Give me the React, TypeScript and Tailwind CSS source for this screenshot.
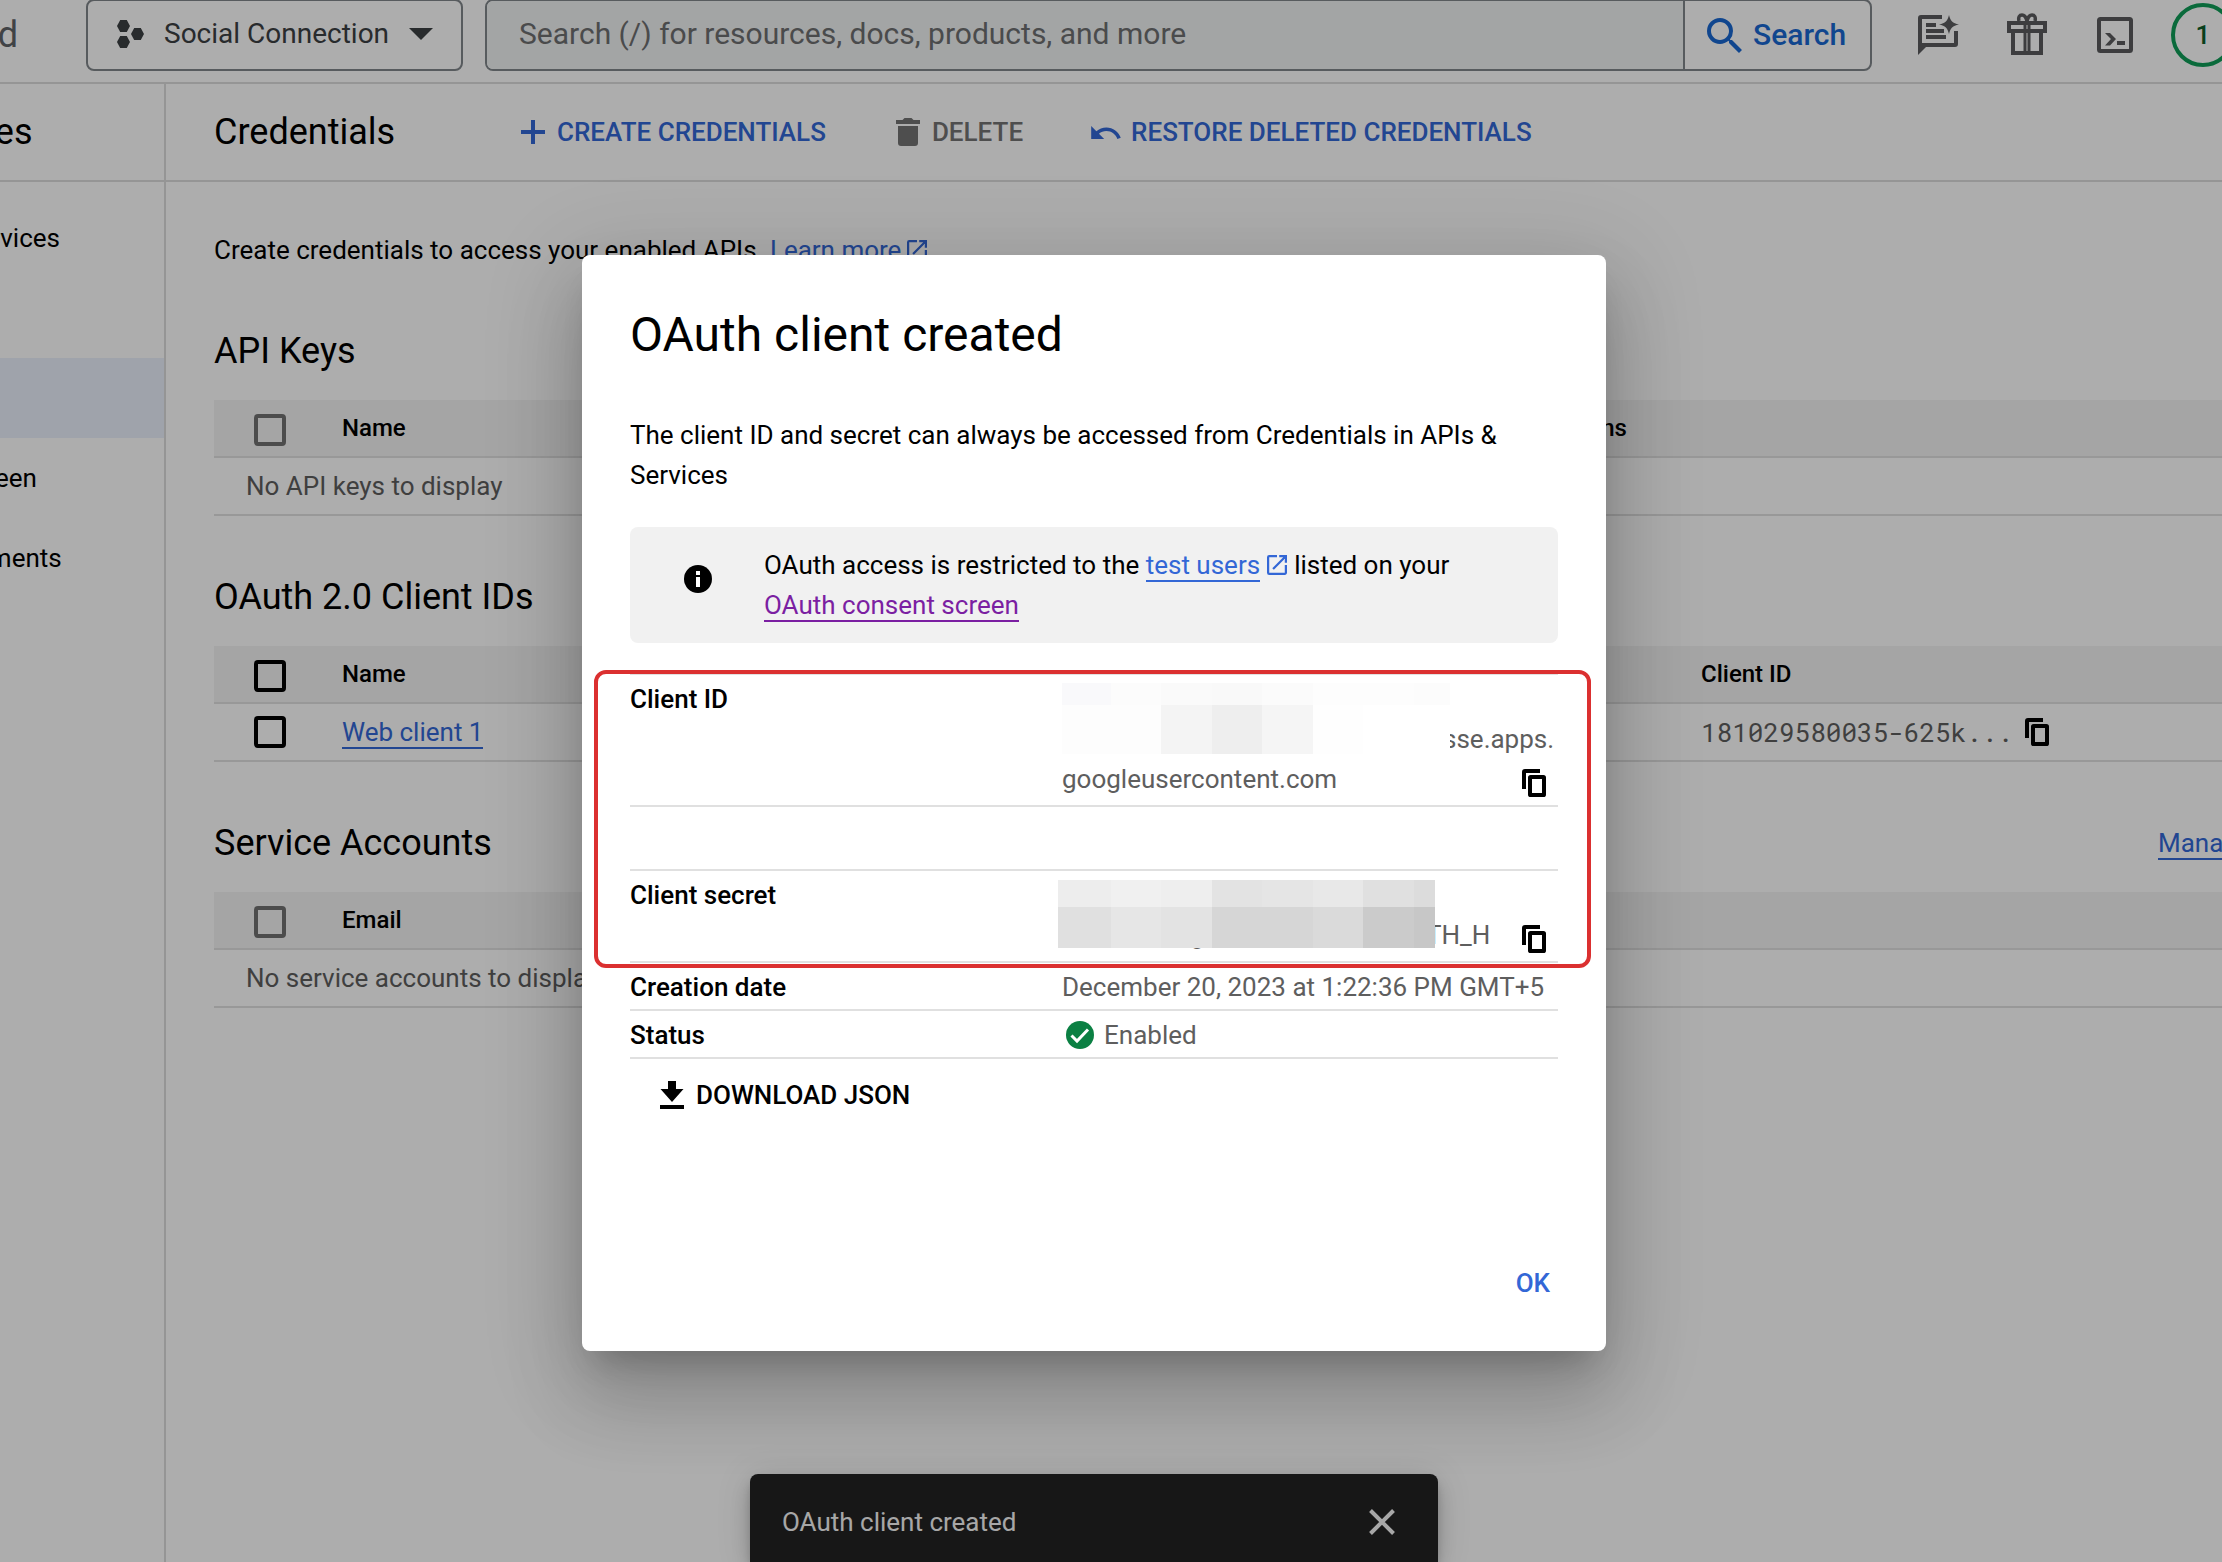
import { useState } from "react"
import type { ReactNode } from "react"

function CopyIcon() {
  return (
    <svg className="h-7 w-6" viewBox="0 0 24 28" fill="none" stroke="currentColor" strokeWidth="4" aria-hidden="true">
      <path d="M2 20V3a1 1 0 0 1 1-1h15" />
      <rect x="8" y="8" width="14" height="18" rx="0.6" />
    </svg>
  )
}

function ExternalIcon() {
  return (
    <svg className="inline-block size-5 align-[-1px]" viewBox="3 3 18 18" fill="currentColor" aria-hidden="true">
      <path d="M19 19H5V5h7V3H5a2 2 0 0 0-2 2v14a2 2 0 0 0 2 2h14c1.1 0 2-.9 2-2v-7h-2v7zM14 3v2h3.59l-9.83 9.83 1.41 1.41L19 6.41V10h2V3h-7z" />
    </svg>
  )
}

function Header() {
  return (
    <header className="flex h-[84px] shrink-0 items-start border-b-2 border-[#dcdcdc]">
      <div className="flex h-[70px] w-[86px] shrink-0 items-center">
        <div className="flex w-[18px] justify-end overflow-hidden text-4xl text-[#5f6368]">Cloud</div>
      </div>
      <button className="-mt-px flex h-[72px] w-[377px] shrink-0 items-center rounded-lg border-2 border-[#80868b] pb-[2px] pl-[29px] text-[28px] text-[#3c4043]">
        <svg className="mr-5 h-7 w-[27px]" viewBox="0 0 27 28" fill="currentColor" aria-hidden="true">
          <path d="M3.2 0h6.6L13 6l-3.2 6H3.2L0 6z" />
          <path d="M17.2 8h6.6L27 14l-3.2 6h-6.6L14 14z" />
          <path d="M3.2 16h6.6L13 22l-3.2 6H3.2L0 22z" />
        </svg>
        Social Connection
        <svg className="ml-auto mr-7 h-3 w-6" viewBox="0 0 24 12" fill="currentColor" aria-hidden="true">
          <path d="M0 0h24L12 12z" />
        </svg>
      </button>
      <form className="-mt-px ml-[22px] flex h-[72px] flex-1 overflow-hidden rounded-lg border-2 border-[#80868b] text-[30px]">
        <input
          type="text"
          aria-label="Search"
          placeholder="Search (/) for resources, docs, products, and more"
          className="min-w-0 flex-1 bg-[#f1f3f4] pb-[2px] pl-8 outline-none placeholder:text-[#6e6f70]"
        />
        <button type="button" className="flex w-[187px] items-center gap-[11px] border-l-2 border-[#80868b] pl-[22px] font-medium text-[#1967d2]">
          <svg className="size-[35px]" viewBox="3 3 17.5 17.5" fill="currentColor" aria-hidden="true">
            <path d="M15.5 14h-.79l-.28-.27A6.47 6.47 0 0 0 16 9.5 6.5 6.5 0 1 0 9.5 16c1.61 0 3.09-.59 4.23-1.57l.27.28v.79l5 4.99L20.49 19l-4.99-5zm-6 0C7.01 14 5 11.99 5 9.5S7.01 5 9.5 5 14 7.01 14 9.5 11.99 14 9.5 14z" />
          </svg>
          Search
        </button>
      </form>
      <div className="flex h-[70px] w-[350px] shrink-0 pl-[23px] text-[#5a5b5d]">
        <button aria-label="Cloud assist" className="flex w-22 shrink-0 items-center justify-center">
          <svg className="h-10 w-[42px]" viewBox="0 0 42 40" fill="currentColor" aria-hidden="true">
            <path d="M3 0h21v4H4v24h32V16h4v13a3 3 0 0 1-3 3H8l-8 8V3a3 3 0 0 1 3-3z" />
            <path d="M8 8h10v4H8zM8 14h18v4H8zM8 20h20v4H8z" />
            <path d="M31 0c1.400 6 3.500 8 10 9.500-6.500 1.500-8.600 3.500-10 9.500-1.400-6-3.500-8-10-9.500 6.500-1.500 8.600-3.500 10-9.500z" />
          </svg>
        </button>
        <button aria-label="Free trial" className="flex w-22 shrink-0 items-center justify-center pb-[2px]">
          <svg className="h-[42px] w-10" viewBox="0 0 40 42" fill="none" stroke="currentColor" strokeWidth="4" aria-hidden="true">
            <path d="M2 10h36v8H2zM6 18v22h28V18" />
            <path d="M18 10v30M22 10v30" strokeWidth="3" />
            <path d="M20 8c-1-4-2.500-6-5-6s-4 2-3 6M20 8c1-4 2.500-6 5-6s4 2 3 6" strokeWidth="3.500" />
          </svg>
        </button>
        <button aria-label="Activate Cloud Shell" className="flex w-22 shrink-0 items-center justify-center">
          <svg className="size-9" viewBox="0 0 36 36" fill="none" aria-hidden="true">
            <rect x="2" y="2" width="32" height="32" rx="1.500" stroke="currentColor" strokeWidth="4" />
            <path d="M8 16h5l6 6-6 6.500H8l6-6.500zM20 24h8v4h-8z" fill="currentColor" />
          </svg>
        </button>
        <button aria-label="1 notification" className="flex w-22 shrink-0 items-center justify-center">
          <span className="flex size-16 items-center justify-center rounded-full border-4 border-[#0f9d58] text-[26px] font-medium text-[#0d5e2a]">
            1
          </span>
        </button>
      </div>
    </header>
  )
}

const navItems = [
  { label: "Enabled APIs & services" },
  { label: "Library" },
  { label: "Credentials", active: true },
  { label: "OAuth consent screen" },
  { label: "Page usage agreements" },
]

function Sidebar() {
  return (
    <nav className="-ml-[346px] w-[512px] shrink-0 border-r-2 border-[#dcdcdc]">
      <h2 className="flex h-[98px] items-center border-b-2 border-[#dcdcdc] pl-32 text-4xl">APIs &amp; Services</h2>
      <ul className="pt-4">
        {navItems.map((item) => (
          <li key={item.label} className={item.active ? "bg-[#ebf1fd]" : ""}>
            <a href="#" className="flex h-20 items-center pl-32">
              {item.label}
            </a>
          </li>
        ))}
      </ul>
    </nav>
  )
}

function Toolbar() {
  return (
    <div className="flex h-[98px] items-center border-b-2 border-[#dcdcdc] pl-12">
      <h1 className="w-[305px] text-4xl">Credentials</h1>
      <div className="flex gap-[68px] font-medium text-[#3367d6]">
        <button className="flex items-center gap-[10px]">
          <svg className="size-7" viewBox="0 0 28 28" stroke="currentColor" strokeWidth="4" aria-hidden="true">
            <path d="M14 2v24M2 14h24" />
          </svg>
          CREATE CREDENTIALS
        </button>
        <button className="flex items-center gap-[10px] text-[#747474]">
          <svg className="size-7" viewBox="0 0 28 28" fill="currentColor" aria-hidden="true">
            <path d="M2 2h6.500l2-2h7l2 2H26v4H2zM4 8h20v17a3 3 0 0 1-3 3H7a3 3 0 0 1-3-3z" />
          </svg>
          DELETE
        </button>
        <button className="flex items-center gap-[10px]">
          <svg className="h-[13px] w-[30px]" viewBox="2 7 20.500 9" fill="currentColor" aria-hidden="true">
            <path d="M12.500 8c-2.650 0-5.050.99-6.900 2.600L2 7v9h9l-3.620-3.620c1.390-1.160 3.160-1.880 5.120-1.880 3.540 0 6.550 2.310 7.600 5.500l2.370-.78C21.080 11.030 17.150 8 12.500 8z" />
          </svg>
          RESTORE DELETED CREDENTIALS
        </button>
      </div>
    </div>
  )
}

function Checkbox({ label, disabled }: { label: string; disabled?: boolean }) {
  return (
    <input
      type="checkbox"
      aria-label={label}
      disabled={disabled}
      className="block size-8 appearance-none rounded-sm border-4 border-black disabled:border-[#717171]"
    />
  )
}

type SectionProps = {
  title: string
  firstColumn: string
  lastColumn?: string
  lastWidth?: string
  disabled?: boolean
  action?: ReactNode
  children: ReactNode
}

function Section({ title, firstColumn, lastColumn, lastWidth, disabled, action, children }: SectionProps) {
  return (
    <section>
      <div className="flex h-[130px] items-start justify-between pt-[61px] leading-10">
        <h2 className="text-4xl leading-10">{title}</h2>
        {action}
      </div>
      <table className="w-full table-fixed border-separate border-spacing-0 text-left">
        <thead>
          <tr className="h-[58px] bg-[#f3f3f3] text-2xl">
            <th className="w-32 border-b-2 border-[#e0e0e0] pl-10 pt-1">
              <Checkbox label={`Select all ${title}`} disabled={disabled} />
            </th>
            <th className="border-b-2 border-[#e0e0e0] font-medium">{firstColumn}</th>
            <th className={`border-b-2 border-[#e0e0e0] font-medium ${lastWidth ?? ""}`}>{lastColumn}</th>
          </tr>
        </thead>
        <tbody>{children}</tbody>
      </table>
    </section>
  )
}

function EmptyRow({ text }: { text: string }) {
  return (
    <tr className="h-[58px] text-[#5e5e5e]">
      <td colSpan={3} className="border-b-2 border-[#e0e0e0] pl-8">
        {text}
      </td>
    </tr>
  )
}

function Credentials() {
  return (
    <main className="min-w-0 flex-1">
      <Toolbar />
      <div className="pl-12 pt-12">
        <p className="leading-10">
          Create credentials to access your enabled APIs.{" "}
          <a href="#" className="text-[#3367d6]">
            Learn more
            <span className="ml-[6px]">
              <ExternalIcon />
            </span>
          </a>
        </p>
        <Section title="API Keys" firstColumn="Name" lastColumn="Restrictions" lastWidth="w-[724px]" disabled>
          <EmptyRow text="No API keys to display" />
        </Section>
        <Section title="OAuth 2.0 Client IDs" firstColumn="Name" lastColumn="Client ID" lastWidth="w-[521px]">
          <tr className="h-[58px]">
            <td className="border-b-2 border-[#e0e0e0] pl-10">
              <Checkbox label="Select Web client 1" />
            </td>
            <td className="border-b-2 border-[#e0e0e0]">
              <a href="#" className="border-b-2 border-[#3367d6] text-[#3367d6]">
                Web client 1
              </a>
            </td>
            <td className="border-b-2 border-[#e0e0e0]">
              <div className="flex items-center gap-3 font-['Roboto_Mono','Liberation_Mono',monospace] text-[#5e5e5e]">
                181029580035-625k...
                <button aria-label="Copy client ID" className="text-black">
                  <CopyIcon />
                </button>
              </div>
            </td>
          </tr>
        </Section>
        <Section
          title="Service Accounts"
          firstColumn="Email"
          disabled
          action={
            <a href="#" className="w-16 whitespace-nowrap text-[#3367d6]">
              <span className="border-b-2 border-[#3367d6]">Manage service accounts</span>
            </a>
          }
        >
          <EmptyRow text="No service accounts to display" />
        </Section>
      </div>
    </main>
  )
}

// Pixelated covers for the hidden parts of the id and the secret
const idMosaic = [
  ["bg-[#f9f9fb]", "bg-[#fcfcfc]", "bg-[#fafafa]", "bg-[#f9f9f9]", "bg-[#fbfbfb]", "bg-[#fdfdfd]", "bg-[#fdfdfd]", "bg-[#fcfcfc]"],
  ["bg-[#fdfdfd]", "bg-[#fdfdfd]", "bg-[#f4f4f4]", "bg-[#eeeeee]", "bg-[#f5f5f5]", "bg-[#fefefe]", "bg-white", "bg-white"],
]
const secretMosaic = [
  ["bg-[#ededed]", "bg-[#f0f0f0]", "bg-[#eeeeee]", "bg-[#e3e3e3]", "bg-[#e5e5e5]", "bg-[#e8e8e8]", "bg-[#e0e0e0]", "bg-[#dcdcdc]"],
  ["bg-[#e0e0e0]", "bg-[#e6e6e6]", "bg-[#e3e3e3]", "bg-[#d6d6d6]", "bg-[#d6d6d6]", "bg-[#dadada]", "bg-[#cbcbcb]", "bg-[#c7c7c7]"],
]

function Mosaic({ rows, className }: { rows: string[][]; className: string }) {
  return (
    <div aria-hidden="true" className={`absolute grid ${className}`}>
      {rows.flat().map((color, i) => (
        <div key={i} className={color} />
      ))}
    </div>
  )
}

function DetailRow({ label, height, children }: { label?: string; height: string; children?: ReactNode }) {
  return (
    <tr className={`align-top ${height}`}>
      <th scope="row" className="w-[432px] border-b-2 border-[#e0e0e0] pt-1 font-medium">
        {label}
      </th>
      <td className="relative border-b-2 border-[#e0e0e0] pt-1 text-[#5e5e5e]">{children}</td>
    </tr>
  )
}

function OAuthDialog({ onClose }: { onClose: () => void }) {
  return (
    <div
      role="dialog"
      aria-labelledby="dialog-title"
      className="relative flex h-[1096px] w-[1024px] flex-col rounded-lg bg-white px-12 pb-10 pt-12 leading-10 shadow-[0_22px_30px_-14px_rgba(0,0,0,0.2),0_48px_76px_6px_rgba(0,0,0,0.14),0_18px_92px_16px_rgba(0,0,0,0.12)]"
    >
      <h2 id="dialog-title" className="text-5xl leading-16">
        OAuth client created
      </h2>
      <p className="mt-12">The client ID and secret can always be accessed from Credentials in APIs &amp; Services</p>
      <div className="mt-8 flex h-[116px] items-center rounded-lg bg-[#f1f1f1] pl-[54px]">
        <svg className="mb-3 mr-[52px] size-7 shrink-0" viewBox="0 0 28 28" aria-hidden="true">
          <circle cx="14" cy="14" r="14" />
          <path d="M12 6h4v4h-4zM12 12h4v10h-4z" fill="#fff" />
        </svg>
        <p className="w-[700px]">
          OAuth access is restricted to the{" "}
          <a href="#" className="text-[#3367d6]">
            <span className="border-b-2 border-[#3367d6]">test users</span>
            <span className="mx-[7px]">
              <ExternalIcon />
            </span>
          </a>
          listed on your
          <br />
          <a href="#" className="border-b-2 border-[#7b1fa2] text-[#7b1fa2]">
            OAuth consent screen
          </a>
        </p>
      </div>

      <table className="mt-[30px] w-full table-fixed border-separate border-spacing-0 border-t-2 border-[#e0e0e0] text-left">
        <tbody>
          <DetailRow label="Client ID" height="h-[132px]">
            <div className="pl-[381px] pt-10">sse.apps.</div>
            <div className="flex justify-between pr-3">
              googleusercontent.com
              <button aria-label="Copy client ID" className="mb-[2px] self-end text-black">
                <CopyIcon />
              </button>
            </div>
            <Mosaic
              rows={idMosaic}
              className="left-0 top-2 grid-cols-[49px_50px_51px_50px_51px_50px_51px_36px] grid-rows-[22px_49px]"
            />
          </DetailRow>
          <DetailRow height="h-16" />
          <DetailRow label="Client secret" height="h-[92px]">
            <div className="flex justify-between pl-32 pr-3 pt-10">
              <span className="w-[236px]">g</span>
              <span className="flex-1">TH_H</span>
              <button aria-label="Copy client secret" className="mb-[2px] self-end text-black">
                <CopyIcon />
              </button>
            </div>
            <Mosaic
              rows={secretMosaic}
              className="-left-1 top-[9px] grid-cols-[53px_50px_51px_50px_51px_50px_51px_21px] grid-rows-[27px_41px]"
            />
          </DetailRow>
          <DetailRow label="Creation date" height="h-12">
            December 20, 2023 at 1:22:36 PM GMT+5
          </DetailRow>
          <DetailRow label="Status" height="h-12">
            <div className="flex items-center gap-[10px] pl-1">
              <svg className="size-7" viewBox="0 0 28 28" aria-hidden="true">
                <circle cx="14" cy="14" r="14" fill="#0b8043" />
                <path d="M5.500 14.500l5.500 5.500L22 8.500" fill="none" stroke="#fff" strokeWidth="3" />
              </svg>
              Enabled
            </div>
          </DetailRow>
        </tbody>
      </table>
      <button className="mt-4 flex items-center gap-3 self-start pl-[30px] font-medium">
        <svg className="h-7 w-6" viewBox="0 0 24 28" aria-hidden="true">
          <path d="M8 0h8v8h7.500L12 21 .5 8H8zM0 24h24v4H0z" />
        </svg>
        DOWNLOAD JSON
      </button>
      <button onClick={onClose} className="mb-2 mr-2 mt-auto self-end font-medium text-[#3367d6]">
        OK
      </button>

      {/* Highlight around the id and the secret */}
      <div className="pointer-events-none absolute left-3 right-[15px] top-[415px] h-[298px] rounded-xl border-4 border-[#db3030]" />
    </div>
  )
}

export default function App() {
  const [dialogOpen, setDialogOpen] = useState(true)

  return (
    <div className="relative flex h-screen flex-col overflow-hidden bg-white font-['Roboto',sans-serif] text-[26px] leading-8 text-black">
      <Header />
      <div className="flex flex-1">
        <Sidebar />
        <Credentials />
      </div>

      {/* Snackbar */}
      <div className="absolute inset-x-0 bottom-0 flex justify-center pr-[34px]">
        <div className="flex h-[88px] w-[688px] items-start justify-between rounded-t-lg bg-[#222222] pl-8 pr-[43px] pt-8 text-[#f7f7f7] shadow-[0_6px_10px_-2px_rgba(0,0,0,0.2),0_12px_20px_rgba(0,0,0,0.14),0_2px_36px_rgba(0,0,0,0.12)]">
          <span>OAuth client created</span>
          <button aria-label="Close" className="mt-[3px]">
            <svg className="size-[26px]" viewBox="0 0 26 26" stroke="currentColor" strokeWidth="4" aria-hidden="true">
              <path d="M1.500 1.500l23 23M24.500 1.500l-23 23" />
            </svg>
          </button>
        </div>
      </div>

      {dialogOpen && (
        <div className="absolute inset-0 flex items-start justify-center bg-black/32 pr-[34px] pt-[255px]">
          <OAuthDialog onClose={() => setDialogOpen(false)} />
        </div>
      )}
    </div>
  )
}
